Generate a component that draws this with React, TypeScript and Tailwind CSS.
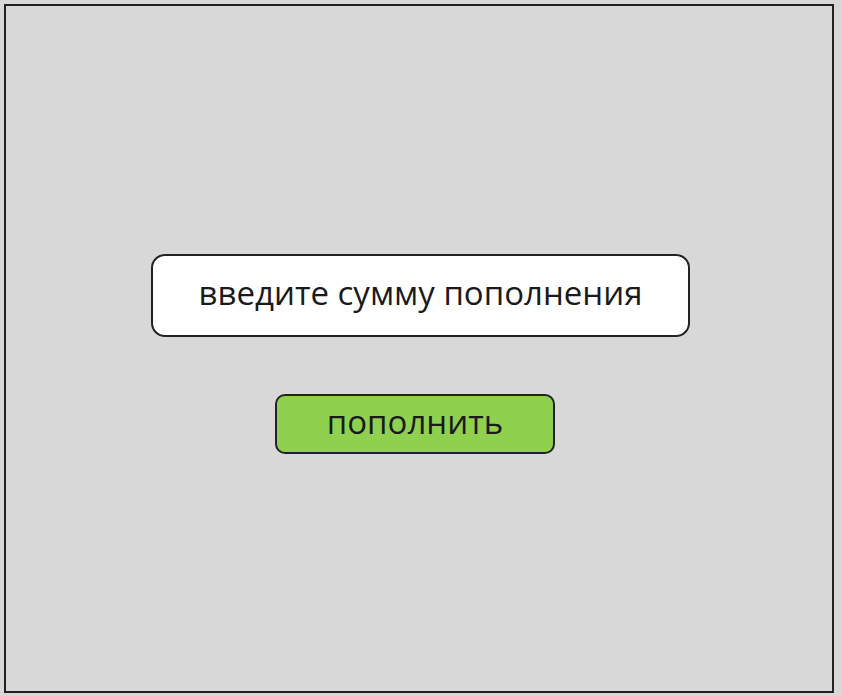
import React from "react";

const App = () => {
  return (
    <div
      className="w-[842px] h-[696px] bg-[#d8d8d8] p-1"
      style={{ fontFamily: '"Open Sans", "Noto Sans", sans-serif' }}
    >
      <div className="w-[830px] h-[689px] border-2 border-[#222222] flex flex-col items-start pt-[248px]">
        <div className="ml-[145px] w-[539px] h-[83px] bg-white border-2 border-[#222222] rounded-[14px] flex items-center justify-center">
          <span className="text-[33px] text-[#1a1a1a] leading-none -mt-[6px]">
            введите сумму пополнения
          </span>
        </div>

        <button
          type="button"
          className="ml-[269px] mt-[57px] w-[280px] h-[60px] bg-[#8fd14f] border-2 border-[#222222] rounded-[10px] flex items-center justify-center"
        >
          <span className="text-[33px] text-[#1a1a1a] leading-none -mt-[5px]">
            пополнить
          </span>
        </button>
      </div>
    </div>
  );
};

export default App;
